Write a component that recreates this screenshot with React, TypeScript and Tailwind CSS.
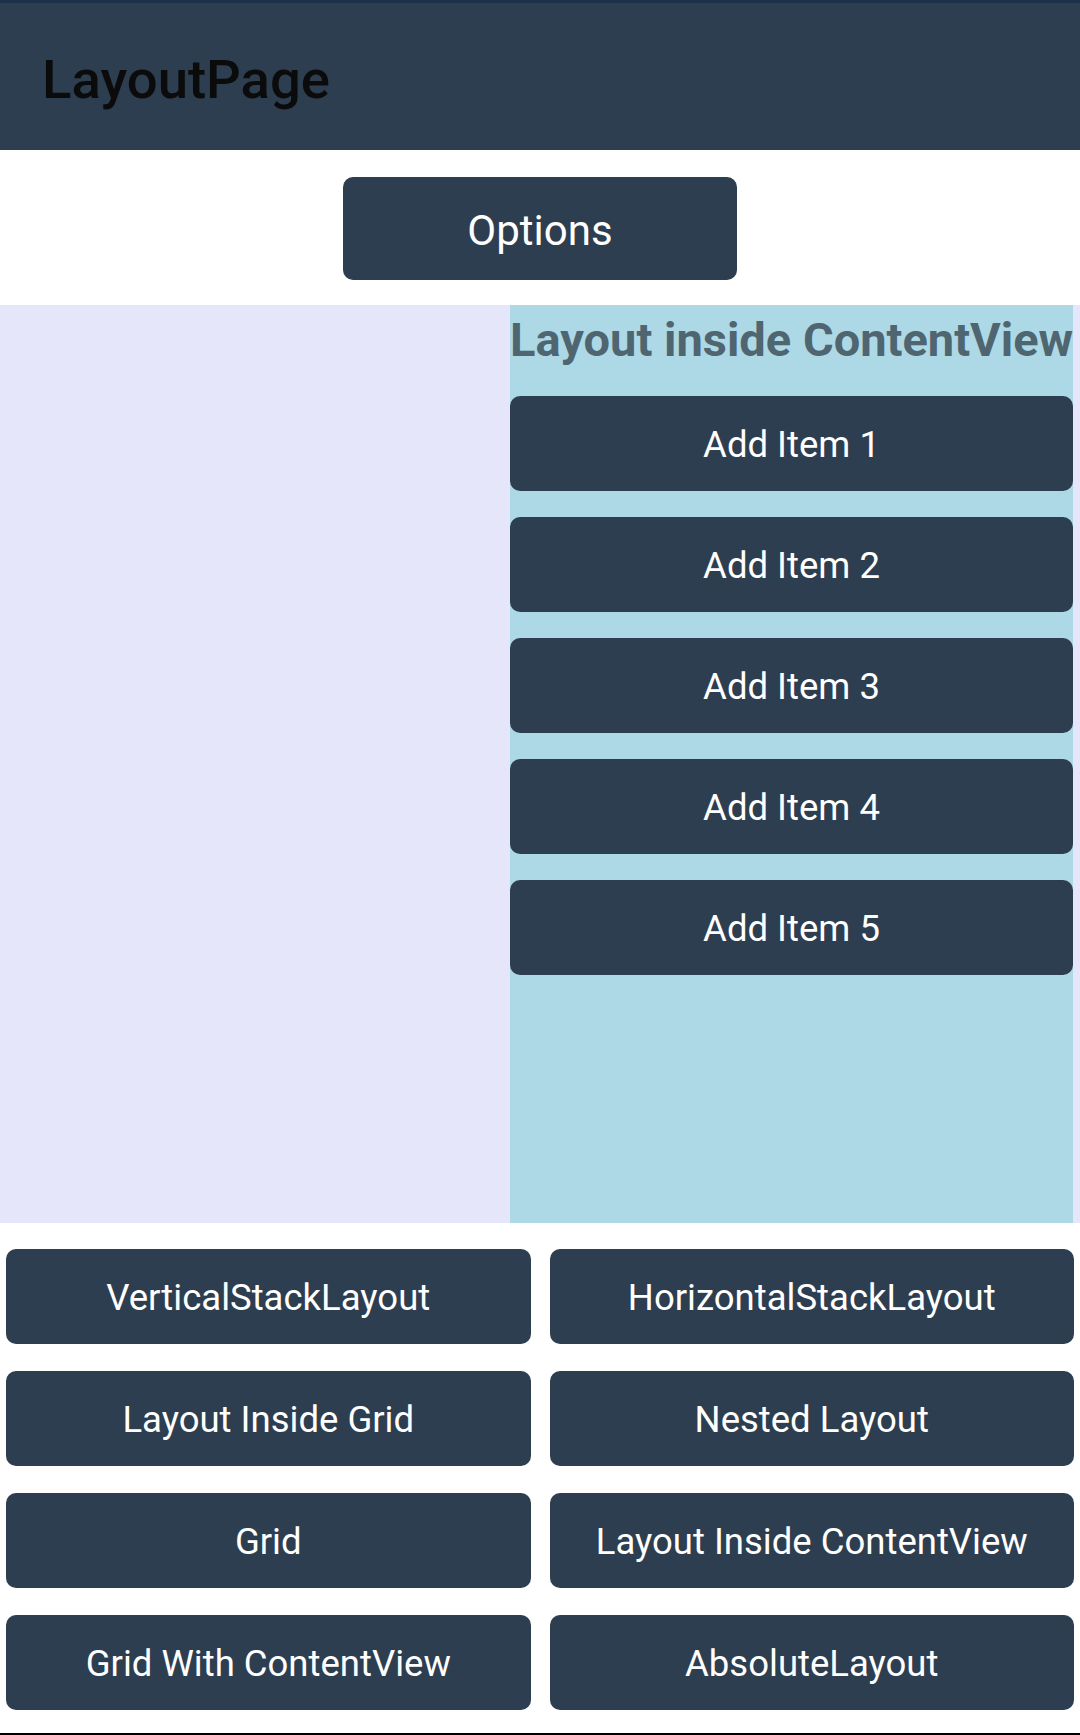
import React from "react";

const btn =
  "flex items-center justify-center rounded-[10px] bg-[#2d3e50] text-white leading-none";

export default function App() {
  const items = ["Add Item 1", "Add Item 2", "Add Item 3", "Add Item 4", "Add Item 5"];
  const nav = [
    "VerticalStackLayout",
    "HorizontalStackLayout",
    "Layout Inside Grid",
    "Nested Layout",
    "Grid",
    "Layout Inside ContentView",
    "Grid With ContentView",
    "AbsoluteLayout",
  ];
  return (
    <div
      className="w-[1080px] h-[1735px] bg-white flex flex-col overflow-hidden"
      style={{ fontFamily: "Roboto, 'Noto Sans', sans-serif" }}
    >
      <div className="h-[3px] bg-[#1d3148]" />
      <div className="h-[147px] bg-[#2d3e50] pl-[42px] pt-[49px]">
        <div className="text-[54.5px] font-medium leading-none text-[#0b0b0b]">LayoutPage</div>
      </div>
      <div className="flex justify-center pt-[27px] pb-[25px]">
        <div className={`${btn} w-[394px] h-[103px] text-[42px] pt-[5px]`}>Options</div>
      </div>
      <div className="h-[918px] bg-[#e6e6fa] flex">
        <div className="w-[510px]" />
        <div className="w-[563px] bg-[#add8e6] flex flex-col">
          <div className="pt-[11px] pb-[33px] text-[47px] font-bold leading-none text-[#4f6570] whitespace-nowrap">
            Layout inside ContentView
          </div>
          <div className="flex flex-col gap-[26px]">
            {items.map((t) => (
              <div key={t} className={`${btn} h-[95px] text-[36.5px] pt-[3px]`}>
                {t}
              </div>
            ))}
          </div>
        </div>
      </div>
      <div className="grid grid-cols-2 gap-x-[19px] gap-y-[27px] px-[6px] pt-[26px]">
        {nav.map((t) => (
          <div key={t} className={`${btn} h-[95px] text-[36.5px] pt-[3px]`}>
            {t}
          </div>
        ))}
      </div>
      <div className="flex-1" />
      <div className="h-[2px] bg-black" />
    </div>
  );
}
